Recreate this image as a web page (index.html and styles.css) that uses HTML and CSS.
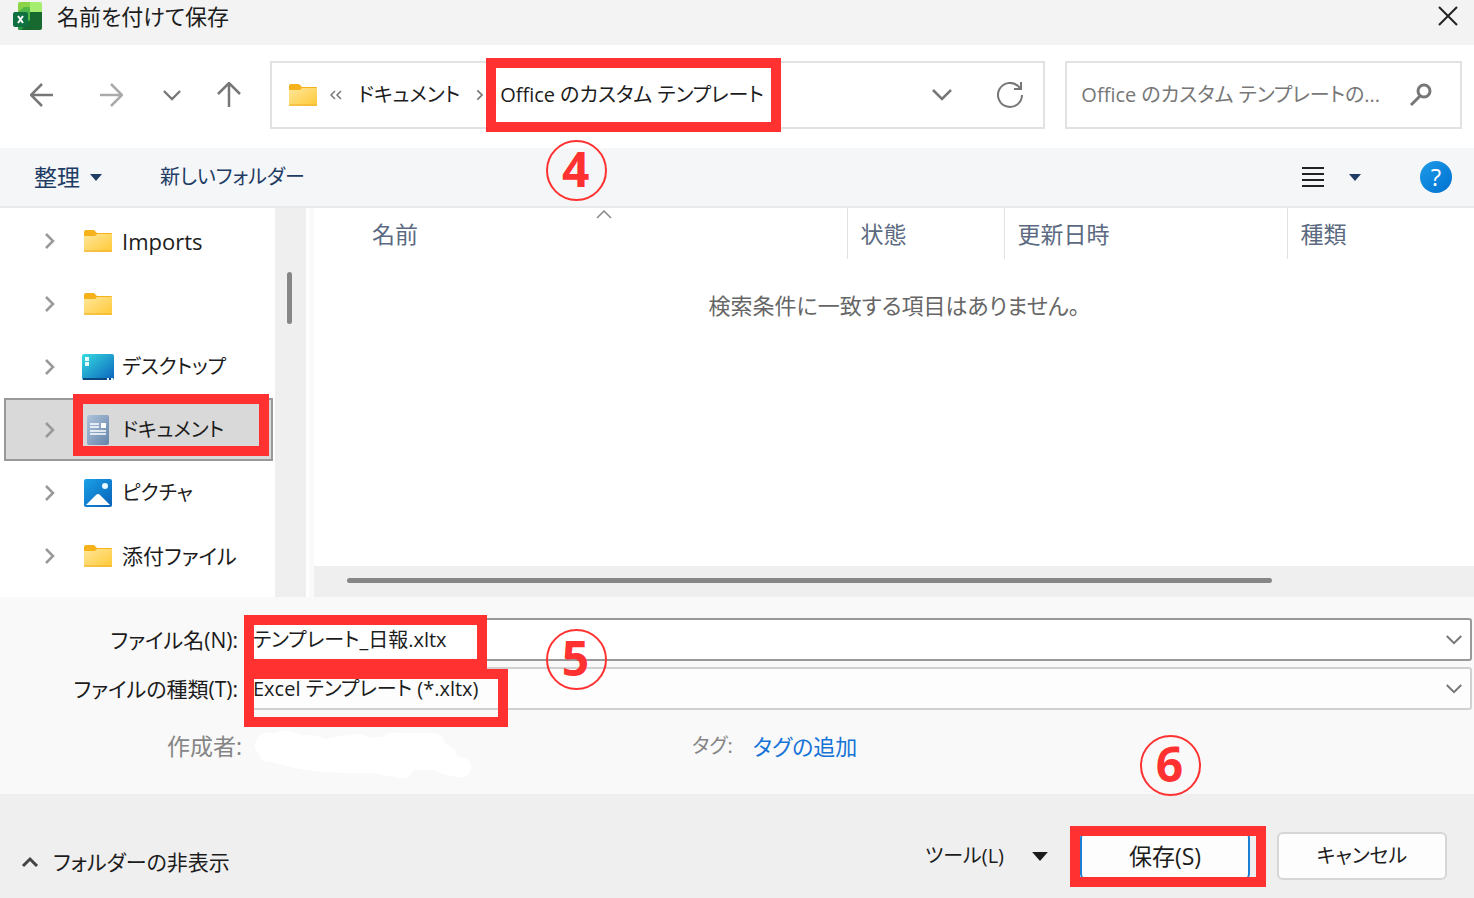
FILE: index.html
```html
<!DOCTYPE html>
<html lang="ja">
<head>
  <meta charset="UTF-8" />
  <meta name="viewport" content="width=device-width, initial-scale=1.0" />
  <title>名前を付けて保存</title>
  <link rel="stylesheet" href="styles.css">
</head>
<body>
  <!-- Shared icons -->
  <svg class="sprite" aria-hidden="true">
    <defs>
      <linearGradient id="folderFill" x1="0" y1="0" x2="1" y2="1">
        <stop offset="0" stop-color="#ffe69a" />
        <stop offset="1" stop-color="#ffc936" />
      </linearGradient>
    </defs>
    <symbol id="folder" viewBox="0 0 30 24">
      <path d="M1 3a2 2 0 0 1 2-2h8l3 3h14a1 1 0 0 1 1 1v6H1z" fill="#f5b21b" />
      <path d="M1 7h11l2-2h15v17a1 1 0 0 1-1 1H2a1 1 0 0 1-1-1z" fill="url(#folderFill)" />
      <path d="M1 22h28" stroke="#eeb02c" />
    </symbol>
    <symbol id="chevron-right" viewBox="0 0 12 18">
      <path d="M2 2l7 7-7 7" fill="none" stroke="currentColor" stroke-width="2.5" />
    </symbol>
    <symbol id="chevron-down" viewBox="0 0 20 12">
      <path d="M1 1l9 9 9-9" fill="none" stroke="currentColor" stroke-width="2.5" />
    </symbol>
    <symbol id="caret" viewBox="0 0 14 8">
      <path d="M0 0h14l-7 8z" fill="currentColor" />
    </symbol>
  </svg>

  <header class="titlebar">
    <svg class="app-icon" viewBox="0 0 30 30" aria-hidden="true">
      <path d="M7 1h12v12H5V3a2 2 0 0 1 2-2z" fill="#8bd448" />
      <path d="M17 1h10a2 2 0 0 1 2 2v9H17z" fill="#a5ee70" />
      <path d="M5 11l6-5h6v13H5z" fill="#52b84a" />
      <path d="M17 11h12v16a2 2 0 0 1-2 2H7a2 2 0 0 1-2-2v-8h12z" fill="#17692f" />
      <path d="M5 19h12l-9 10H7a2 2 0 0 1-2-2z" fill="#2c9b45" />
      <rect x="0" y="11" width="15" height="15" rx="2" fill="#0f7040" />
      <path d="M5 15l5 7M10 15l-5 7" stroke="#fff" stroke-width="2" />
    </svg>
    <h1>名前を付けて保存</h1>
    <button class="icon-button close" aria-label="閉じる">
      <svg width="20" height="20" viewBox="0 0 20 20"><path d="M1 1l18 18M19 1L1 19" stroke="#222" stroke-width="2" /></svg>
    </button>
  </header>

  <nav class="navbar">
    <div class="nav-buttons">
      <button class="icon-button" aria-label="戻る">
        <svg width="24" height="24" viewBox="0 0 24 24"><path d="M12 1L1 12l11 11M1 12h22" fill="none" stroke="#777" stroke-width="2.5" /></svg>
      </button>
      <button class="icon-button forward" aria-label="進む">
        <svg width="24" height="24" viewBox="0 0 24 24"><path d="M12 1l11 11-11 11M23 12H1" fill="none" stroke="#aaa" stroke-width="2.5" /></svg>
      </button>
      <button class="icon-button recent" aria-label="最近表示した場所">
        <svg width="18" height="11"><use href="#chevron-down" /></svg>
      </button>
      <button class="icon-button" aria-label="上へ">
        <svg width="26" height="26" viewBox="0 0 26 26"><path d="M2 12L13 1l11 11M13 1v24" fill="none" stroke="#777" stroke-width="2.5" /></svg>
      </button>
    </div>

    <div class="address">
      <svg width="30" height="24"><use href="#folder" /></svg>
      <svg class="overflow" width="12" height="12" viewBox="0 0 12 12"><path d="M5 2L1 6l4 4M11 2L7 6l4 4" fill="none" stroke="#777" stroke-width="1.5" /></svg>
      <a href="#">ドキュメント</a>
      <svg class="separator" width="8" height="14"><use href="#chevron-right" /></svg>
      <div class="crumb">
        <a href="#">Office のカスタム テンプレート</a>
        <span class="frame frame-path"></span>
        <span class="step step-path">4</span>
      </div>
      <button class="icon-button history" aria-label="以前の場所">
        <svg width="20" height="12"><use href="#chevron-down" /></svg>
      </button>
      <button class="icon-button" aria-label="最新の情報に更新">
        <svg width="26" height="26" viewBox="0 0 26 26"><path d="M25 13a12 12 0 1 1-4-9l3 3M24 0v7h-7" fill="none" stroke="#777" stroke-width="2" /></svg>
      </button>
    </div>

    <div class="search">
      <input type="text" aria-label="検索" placeholder="Office のカスタム テンプレートの..." />
      <svg width="24" height="24" viewBox="0 0 24 24" aria-hidden="true"><circle cx="15" cy="8" r="6" fill="none" stroke="#777" stroke-width="3" /><path d="M11 13L2 22" stroke="#777" stroke-width="3" /></svg>
    </div>
  </nav>

  <div class="toolbar">
    <button class="text-button organize">整理 <svg width="12" height="7"><use href="#caret" /></svg></button>
    <button class="text-button new-folder">新しいフォルダー</button>
    <button class="icon-button view" aria-label="表示">
      <svg width="24" height="22" viewBox="0 0 24 22"><path d="M1 2h22M1 8h22M1 14h22M1 20h22" stroke="#222" stroke-width="2" /></svg>
    </button>
    <button class="icon-button view-menu" aria-label="その他のオプション">
      <svg width="12" height="7"><use href="#caret" /></svg>
    </button>
    <button class="help" aria-label="ヘルプ">?</button>
  </div>

  <main class="browser">
    <ul class="tree">
      <li><svg class="arrow" width="12" height="18"><use href="#chevron-right" /></svg><svg class="icon" width="32" height="24"><use href="#folder" /></svg><a class="latin" href="#">Imports</a></li>
      <li><svg class="arrow" width="12" height="18"><use href="#chevron-right" /></svg><svg class="icon" width="32" height="24"><use href="#folder" /></svg></li>
      <li>
        <svg class="arrow" width="12" height="18"><use href="#chevron-right" /></svg>
        <svg class="icon" width="32" height="26" viewBox="0 0 32 26">
          <defs><linearGradient id="deskFill" x1="0" y1="0" x2="1" y2="1"><stop offset="0" stop-color="#36dce0" /><stop offset="1" stop-color="#0c62bd" /></linearGradient></defs>
          <rect width="32" height="26" rx="2" fill="url(#deskFill)" />
          <path d="M1 25h30" stroke="#0b4a80" stroke-width="2" />
          <path d="M3 3h4v4H3zM3 8h4v4H3zM25 24h2v2h-2zM29 24h2v2h-2z" fill="#e8ffff" />
        </svg>
        <a href="#">デスクトップ</a>
      </li>
      <li class="selected">
        <svg class="arrow" width="12" height="18"><use href="#chevron-right" /></svg>
        <svg class="icon" width="32" height="32" viewBox="0 0 32 32">
          <defs><linearGradient id="docFill" x1="0" y1="0" x2="1" y2="1"><stop offset="0" stop-color="#afc4dc" /><stop offset="1" stop-color="#6484a8" /></linearGradient></defs>
          <rect x="5" y="1" width="22" height="30" rx="2" fill="url(#docFill)" />
          <path d="M8 10h9M8 13h9M8 17h16M8 20h16" stroke="#fff" stroke-width="1.5" />
          <path d="M19 9h5v5h-5z" fill="#fff" />
        </svg>
        <a href="#">ドキュメント</a>
        <span class="frame frame-tree"></span>
      </li>
      <li>
        <svg class="arrow" width="12" height="18"><use href="#chevron-right" /></svg>
        <svg class="icon" width="32" height="28" viewBox="0 0 32 28">
          <defs><linearGradient id="picFill" x1="0" y1="0" x2="1" y2="1"><stop offset="0" stop-color="#1ba0e8" /><stop offset="1" stop-color="#0861b8" /></linearGradient></defs>
          <rect x="2" width="28" height="28" rx="2" fill="url(#picFill)" />
          <path d="M4 26l10-10q2-2 4 0l10 10z" fill="#fff" />
          <circle cx="23" cy="7" r="3" fill="#eaf8ff" />
        </svg>
        <a href="#">ピクチャ</a>
      </li>
      <li><svg class="arrow" width="12" height="18"><use href="#chevron-right" /></svg><svg class="icon" width="32" height="24"><use href="#folder" /></svg><a class="kanji" href="#">添付ファイル</a></li>
    </ul>
    <div class="tree-scroll"><span></span></div>

    <section class="files">
      <table>
        <thead>
          <tr>
            <th class="col-name" aria-sort="ascending">名前<svg class="sort" width="16" height="9" viewBox="0 0 16 9"><path d="M1 8l7-7 7 7" fill="none" stroke="#888" stroke-width="1.5" /></svg></th>
            <th class="col-state">状態</th>
            <th class="col-date">更新日時</th>
            <th>種類</th>
          </tr>
        </thead>
      </table>
      <p class="empty">検索条件に一致する項目はありません。</p>
      <div class="files-scroll"><span></span></div>
    </section>
  </main>

  <form class="details">
    <div class="row">
      <label for="fileName">ファイル名(N):</label>
      <div class="field field-name">
        <input type="text" id="fileName" value="テンプレート_日報.xltx" />
        <svg width="16" height="10"><use href="#chevron-down" /></svg>
        <span class="frame frame-name"></span>
        <span class="step step-name">5</span>
      </div>
    </div>
    <div class="row">
      <label for="fileType">ファイルの種類(T):</label>
      <div class="field">
        <select id="fileType">
          <option>Excel テンプレート (*.xltx)</option>
        </select>
        <svg width="16" height="10"><use href="#chevron-down" /></svg>
        <span class="frame frame-type"></span>
      </div>
    </div>
    <div class="meta">
      <span class="author">作成者:</span>
      <svg class="author-value" width="218" height="50" viewBox="0 0 218 50" aria-hidden="true">
        <path d="M0 15Q3 0 20 3Q32-3 45 5Q60 4 70 9Q83 6 96 5Q106 2 115 8Q122 7 127 7Q132 2 140 3H176Q188 3 190 14Q201 17 202 26Q218 28 216 40Q211 51 198 46Q185 44 180 40L158 40Q155 52 140 47Q130 46 118 43Q65 44 35 37L16 32Q5 33 4 23Q0 21 0 15z" fill="#fff" />
      </svg>
      <span class="tag">タグ:</span>
      <a class="tag-link" href="#">タグの追加</a>
    </div>
  </form>

  <footer class="actions">
    <button class="text-button hide-folders"><svg width="18" height="12" viewBox="0 0 18 12"><path d="M2 10l7-7 7 7" fill="none" stroke="#444" stroke-width="3" /></svg>フォルダーの非表示</button>
    <button class="text-button tools">ツール(L) <svg width="16" height="9"><use href="#caret" /></svg></button>
    <div class="save-wrap">
      <button class="button save">保存(S)</button>
      <span class="frame frame-save"></span>
      <span class="step step-save">6</span>
    </div>
    <button class="button">キャンセル</button>
  </footer>
</body>
</html>
```
FILE: styles.css
```css
* {
  box-sizing: border-box;
}
body {
  margin: 0;
  min-height: 100vh;
  display: flex;
  flex-direction: column;
  font-family: "Open Sans", "Noto Sans CJK JP", sans-serif;
  font-feature-settings: "palt";
  font-size: 20px;
  line-height: 32px;
  color: #1c1c1c;
  background-color: #fff;
  white-space: nowrap;
}
a {
  color: inherit;
  text-decoration: none;
}
button, input, select {
  font: inherit;
  font-feature-settings: inherit;
  color: inherit;
}
.sprite {
  position: absolute;
  width: 0;
  height: 0;
}
.icon-button, .text-button {
  display: flex;
  align-items: center;
  padding: 0;
  border: none;
  background: none;
  color: #777;
  cursor: pointer;
}

/* Title bar */
.titlebar {
  display: flex;
  align-items: center;
  padding: 0 16px 13px 13px;
  background-color: #f3f3f3;
}
.titlebar h1 {
  margin: 0 auto 0 14px;
  font-size: 22px;
  font-weight: 400;
}
.app-icon {
  width: 30px;
  height: 30px;
}

/* Address and search */
.navbar {
  display: flex;
  align-items: center;
  padding: 16px 12px 19px 30px;
}
.nav-buttons {
  display: flex;
  align-items: center;
  width: 240px;
}
.forward {
  margin-left: 45px;
}
.recent {
  margin: 0 35px 0 40px;
}
.address, .search {
  display: flex;
  align-items: center;
  height: 68px;
  border: 2px solid #e2e2e2;
}
.address {
  flex: 1;
  padding: 0 20px 0 16px;
}
.overflow {
  margin: 0 16px 0 12px;
}
.separator {
  margin: 0 16px;
  color: #777;
}
.crumb {
  position: relative;
}
.history {
  margin: 0 45px 0 auto;
}
.search {
  width: 27.7%;
  margin-left: 20px;
  padding: 0 27px 0 14px;
}
.search input {
  flex: 1;
  min-width: 0;
  padding: 0;
  border: none;
  outline: none;
}
.search input::placeholder {
  color: #777;
  opacity: 1;
}

/* Toolbar */
.toolbar {
  display: flex;
  align-items: center;
  height: 60px;
  padding: 0 22px 0 34px;
  background-color: #f4f6f8;
  border-bottom: 2px solid #e8eaec;
}
.toolbar .text-button, .view-menu {
  color: #1f3c64;
}
.toolbar .organize {
  gap: 10px;
  font-size: 23px;
}
.new-folder {
  margin: 0 auto 0 58px;
}
.view-menu {
  margin: 0 59px 0 24px;
}
.help {
  width: 32px;
  height: 32px;
  padding: 0;
  border: none;
  border-radius: 50%;
  background: linear-gradient(135deg, #1c9be8, #0070d0);
  color: #fff;
  font-size: 24px;
}

/* Folder tree and file list */
.browser {
  flex: 1;
  display: flex;
}
.tree {
  width: 275px;
  margin: 0;
  padding: 1px 2px 10px 4px;
  list-style: none;
}
.tree li {
  position: relative;
  display: flex;
  align-items: center;
  height: 63px;
  padding-left: 40px;
}
.tree .selected {
  padding-left: 38px;
  background-color: #d9d9d9;
  border: 2px solid #999;
}
.arrow {
  margin-right: 26px;
  color: #999;
}
.icon {
  margin-right: 8px;
}
.latin {
  font-size: 22px;
}
.kanji {
  font-size: 21px;
}
.tree-scroll {
  width: 31px;
  padding: 64px 0 0 12px;
  background-color: #efefef;
}
.tree-scroll span {
  display: block;
  width: 5px;
  height: 52px;
  border-radius: 3px;
  background-color: #868686;
}
.files {
  flex: 1;
  display: flex;
  flex-direction: column;
  margin-left: 3px;
  border-left: 5px solid #fafafa;
}
.files table {
  width: calc(100% - 46px);
  margin-left: 46px;
  border-collapse: collapse;
  table-layout: fixed;
}
.files th {
  position: relative;
  height: 51px;
  padding: 0 0 0 12px;
  border-left: 1px solid #e2e2e2;
  color: #5b6a80;
  font-size: 23px;
  font-weight: 400;
  text-align: left;
}
.files .col-name {
  width: 43.8%;
  border-left: none;
}
.col-state {
  width: 14.1%;
}
.col-date {
  width: 25.4%;
}
.sort {
  position: absolute;
  top: 2px;
  left: 50%;
  margin-left: -8px;
}
.empty {
  margin: 30px 0 0;
  color: #666;
  font-size: 22px;
  text-align: center;
}
.files-scroll {
  height: 31px;
  margin-top: auto;
  padding: 12px 17.4% 0 33px;
  background-color: #efefef;
}
.files-scroll span {
  display: block;
  height: 5px;
  border-radius: 3px;
  background-color: #868686;
}

/* File name and type */
.details {
  padding: 21px 2px 14px 0;
  background-color: #f9f9f9;
}
.row {
  display: grid;
  grid-template-columns: 238px 1fr;
  gap: 9px;
  align-items: center;
  margin-bottom: 6px;
}
.row label {
  font-size: 21px;
  text-align: right;
}
.field {
  position: relative;
  display: flex;
  align-items: center;
  height: 43px;
  padding-right: 8px;
  border: 2px solid #d0d0d0;
  border-radius: 3px;
  background-color: #fdfdfd;
}
.field-name {
  z-index: 1;
  border-color: #999;
  background-color: #fff;
}
.field input, .field select {
  flex: 1;
  min-width: 0;
  padding: 0 0 0 4px;
  border: none;
  outline: none;
  background: none;
  appearance: none;
}
.field svg {
  color: #777;
}
.meta {
  display: grid;
  grid-template-columns: 242px 450px auto 1fr;
  align-items: start;
  margin-top: 20px;
  color: #858585;
}
.author {
  font-size: 23px;
  text-align: right;
}
.author-value {
  margin-left: 13px;
}
.tag-link {
  margin-left: 20px;
  color: #1673d6;
  font-size: 22px;
}

/* Bottom buttons */
.actions {
  display: flex;
  align-items: center;
  padding: 38px 27px 18px 21px;
  background-color: #efefef;
}
.actions .text-button {
  color: #1c1c1c;
}
.hide-folders {
  gap: 14px;
  margin: 12px auto 0 0;
  font-size: 21px;
}
.tools {
  gap: 28px;
  margin-right: 32px;
}
.save-wrap {
  position: relative;
  margin-right: 27px;
}
.button {
  width: 170px;
  height: 48px;
  padding: 0;
  border: 2px solid #d6d6d6;
  border-radius: 6px;
  background-color: #fdfdfd;
  cursor: pointer;
}
.save {
  border-color: #1a7fd4;
  font-size: 23px;
}

/* Callouts */
.frame {
  position: absolute;
  border: 10px solid #ff3131;
  pointer-events: none;
}
.frame-path {
  top: -21px;
  left: -14px;
  width: 295px;
  height: 74px;
}
.frame-tree {
  top: -6px;
  left: 67px;
  width: 196px;
  height: 62px;
}
.frame-name {
  top: -5px;
  left: -5px;
  width: 243px;
  height: 54px;
}
.frame-type {
  top: 0;
  left: -5px;
  width: 264px;
  height: 58px;
}
.frame-save {
  top: -6px;
  left: -10px;
  width: 196px;
  height: 61px;
}
.step {
  position: absolute;
  display: flex;
  align-items: center;
  justify-content: center;
  width: 61px;
  height: 61px;
  padding: 0 2px 4px 0;
  border: 2px solid #ff3131;
  border-radius: 50%;
  color: #ff3131;
  font-family: "Open Sans", sans-serif;
  font-size: 48px;
  font-weight: 700;
  pointer-events: none;
}
.step-path {
  top: 61px;
  left: 46px;
}
.step-name {
  top: 9px;
  left: 297px;
}
.step-save {
  top: -97px;
  left: 60px;
}
```
